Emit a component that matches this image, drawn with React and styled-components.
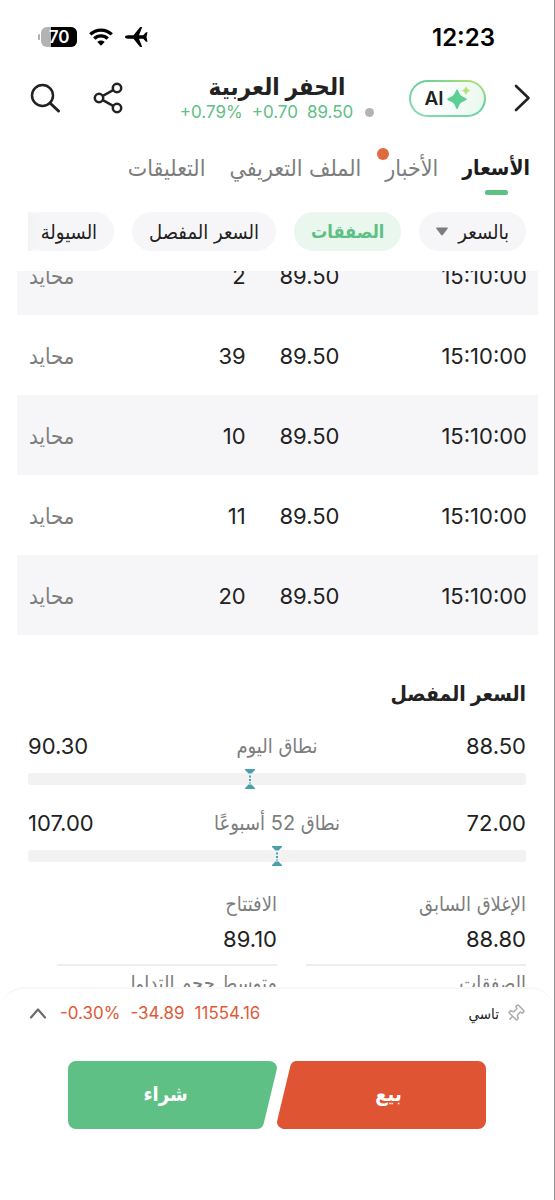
import React, { useLayoutEffect, useRef } from "react";
import styled, { createGlobalStyle } from "styled-components";
import { Pin } from "lucide-react";

const GlobalStyle = createGlobalStyle`
  * { box-sizing: border-box; }
  body {
    margin: 0;
    background: #fff;
    color: #222;
    font-family: Inter, "DejaVu Sans Condensed", "DejaVu Sans", sans-serif;
  }
  button, a { font-family: inherit; color: inherit; }
  button { border: 0; padding: 0; background: none; cursor: pointer; }
`;

const Screen = styled.main`
  height: 100vh;
  display: flex;
  flex-direction: column;
  overflow: hidden;
  background: #fff;
  border-right: 1px solid #909090;
`;

const StatusBar = styled.div`
  display: flex;
  align-items: center;
  justify-content: space-between;
  height: 72px;
  flex: none;
  padding: 2px 59px 0 38px;
  color: #000;
`;
const Clock = styled.time`
  font-size: 24px;
  font-weight: 600;
`;
const StatusIcons = styled.div`
  display: flex;
  align-items: center;
  gap: 12px;
  direction: ltr;
`;

const Header = styled.header`
  display: grid;
  grid-template-columns: 1fr auto 1fr;
  align-items: center;
  height: 52px;
  flex: none;
  padding: 0 23px;
`;
const HeaderSide = styled.div`
  display: flex;
  align-items: center;
  gap: ${(p) => p.$gap}px;
  justify-content: ${(p) => (p.$end ? "flex-end" : "flex-start")};
  padding-inline-end: ${(p) => (p.$end ? 7 : 0)}px;
`;
const IconButton = styled.button`
  display: flex;
  color: #222;
`;
const AiButton = styled.button`
  display: flex;
  align-items: center;
  justify-content: center;
  gap: 3px;
  width: 77px;
  height: 37px;
  border: 2px solid transparent;
  border-radius: 19px;
  background: linear-gradient(100deg, #fff 30%, #e9f8f0) padding-box,
    linear-gradient(200deg, #c3e36c, #62ce9d 40%, #8bdcb8) border-box;
  font-size: 19px;
  font-weight: 600;
  direction: ltr;
`;
const TitleBlock = styled.div`
  display: flex;
  flex-direction: column;
  align-items: center;
  padding-top: 2px;
`;
const Title = styled.h1`
  margin: 0;
  font-size: 24px;
  line-height: 26px;
  font-weight: 700;
`;
const Quote = styled.div`
  display: flex;
  align-items: center;
  gap: 9px;
  font-size: 17px;
  line-height: 24px;
  color: #5fc085;
`;
const Dot = styled.i`
  width: 9px;
  height: 9px;
  margin-inline-end: 3px;
  border-radius: 50%;
  background: #b3b3b3;
`;

const Tabs = styled.nav`
  display: flex;
  flex: none;
  gap: 24px;
  height: 88px;
  padding: 26px 24px 0;
`;
const Tab = styled.a`
  position: relative;
  display: flex;
  flex-direction: column;
  align-items: center;
  gap: 4px;
  height: 46px;
  font-size: ${(p) => (p.$active ? 21 : 23)}px;
  line-height: 36px;
  font-weight: ${(p) => (p.$active ? 700 : 400)};
  color: ${(p) => (p.$active ? "#1c1c1c" : "#7d7d7d")};
  white-space: nowrap;
  text-decoration: none;
  &::after {
    content: "";
    width: 23px;
    height: 5px;
    border-radius: 2px;
    background: ${(p) => (p.$active ? "#5fc085" : "transparent")};
  }
`;
const Badge = styled.i`
  position: absolute;
  top: -2px;
  left: -8px;
  width: 12px;
  height: 12px;
  border-radius: 50%;
  background: #e06a40;
`;

const Chips = styled.div`
  position: relative;
  display: flex;
  flex: none;
  gap: 18px;
  margin: 0 28px 20px;
  overflow: hidden;
  &::after {
    content: "";
    position: absolute;
    inset: 0 auto 0 0;
    width: 12px;
    background: linear-gradient(90deg, #f0f2f4, #f6f6f800);
  }
`;
const Chip = styled.button`
  display: flex;
  align-items: center;
  justify-content: center;
  gap: 10px;
  flex: none;
  height: 39px;
  padding: 0 17px;
  border-radius: 20px;
  font-size: ${(p) => (p.$active ? 18 : 20)}px;
  font-weight: ${(p) => (p.$active ? 700 : 400)};
  color: ${(p) => (p.$active ? "#5fc085" : "#222")};
  background: ${(p) => (p.$active ? "#e9f7ef" : "#f6f6f8")};
`;

const Scroll = styled.div`
  flex: 1;
  min-height: 0;
  overflow-y: auto;
  scrollbar-width: none;
`;
const Trades = styled.table`
  width: calc(100% - 33px);
  margin: 0 16px 0 17px;
  table-layout: fixed;
  border-collapse: collapse;
  font-size: 22px;
`;
const TradeRow = styled.tr`
  height: 80px;
  &:nth-child(odd) { background: #f6f6f9; }
`;
const Cell = styled.td`
  width: ${(p) => p.$width};
  padding: 2px 11px 0;
  text-align: start;
`;
const SideCell = styled(Cell)`
  padding-inline-end: 12px;
  text-align: end;
  font-size: 22px;
  color: #7d7d7d;
`;

const Details = styled.section`
  padding: 42px 28px 0;
`;
const SectionTitle = styled.h2`
  margin: 0 0 19px;
  font-size: 21px;
  line-height: 34px;
  font-weight: 700;
`;
const Range = styled.div`
  margin-bottom: 22px;
`;
const RangeLabels = styled.div`
  display: grid;
  grid-template-columns: 1fr auto 1fr;
  align-items: center;
  height: 33px;
  margin-bottom: 10px;
  font-size: 22px;
  line-height: 33px;
`;
const Muted = styled.span`
  font-size: 20px;
  color: #7d7d7d;
`;
const EndValue = styled.span`
  text-align: end;
`;
const Track = styled.div`
  position: relative;
  height: 12px;
  border-radius: 3px;
  background: #f2f2f2;
`;
const Marker = styled.svg`
  position: absolute;
  top: -4px;
  margin-left: -5px;
`;
const Stats = styled.dl`
  display: grid;
  grid-template-columns: 1fr 1fr;
  column-gap: 29px;
  margin: 25px 0 0;
  padding-left: 29px;
`;
const Stat = styled.div`
  height: 79px;
  border-bottom: 2px solid #eee;
  white-space: nowrap;
`;
const StatLabel = styled.dt`
  font-size: 20px;
  line-height: 34px;
  color: #7d7d7d;
`;
const StatValue = styled.dd`
  margin: 0;
  font-size: 22px;
  line-height: 36px;
`;

const Footer = styled.footer`
  position: relative;
  flex: none;
  height: 213px;
  background: #fff;
  border-top: 2px solid #f8f8f8;
  border-radius: 24px 24px 0 0;
`;
const Ticker = styled.div`
  display: flex;
  align-items: center;
  height: 48px;
  padding: 0 29px;
  font-size: 17px;
`;
const PinIcon = styled(Pin)`
  color: #b0b0b0;
  transform: rotate(45deg);
`;
const IndexName = styled.span`
  margin-inline-start: 7px;
  font-size: 15px;
`;
const IndexValues = styled.span`
  display: flex;
  gap: 10px;
  margin-inline: auto 13px;
  color: #e05a38;
`;
const Actions = styled.div`
  display: flex;
  padding: 24px 68px 0;
`;
const Action = styled.button`
  position: relative;
  flex: 1;
  height: 68px;
  padding: ${(p) => (p.$sell ? "0 0 2px 14px" : "0 14px 2px 0")};
  font-size: 20px;
  font-weight: 700;
  color: #fff;
`;
const ActionShape = styled.svg`
  position: absolute;
  inset: 0;
  width: 100%;
  height: 100%;
`;
const ActionLabel = styled.span`
  position: relative;
`;

const Num = ({ children }) => <bdi dir="ltr">{children}</bdi>;

const trades = [
  ["15:10:00", "89.50", "2"],
  ["15:10:00", "89.50", "39"],
  ["15:10:00", "89.50", "10"],
  ["15:10:00", "89.50", "11"],
  ["15:10:00", "89.50", "20"],
];

const ranges = [
  { low: "88.50", label: "نطاق اليوم", high: "90.30", at: 44.6 },
  { low: "72.00", label: "نطاق 52 أسبوعًا", high: "107.00", at: 50 },
];

const stats = [
  ["الإغلاق السابق", "88.80"],
  ["الافتتاح", "89.10"],
  ["الصفقات"],
  ["متوسط حجم التداول"],
];

function Battery() {
  return (
    <svg width="39" height="20" viewBox="0 0 39 20" role="img" aria-label="70%">
      <path d="M2 7a3 3 0 0 0 0 6z" fill="#b3b3b3" />
      <rect x="3" width="36" height="20" rx="6" fill="#b3b3b3" />
      <path d="M13 0h20a6 6 0 0 1 6 6v8a6 6 0 0 1-6 6H13z" fill="#000" />
      <text x="21" y="16" textAnchor="middle" fontSize="17" fontWeight="600" fill="#fff" fontFamily="Inter">70</text>
    </svg>
  );
}
function Wifi() {
  return (
    <svg width="24" height="18" viewBox="0 0 24 18" fill="none" stroke="#000" strokeWidth="3.400">
      <path d="M1.3 6.4a15.4 15.4 0 0 1 21.4 0" />
      <path d="M5.3 10.6a9.6 9.6 0 0 1 13.4 0" />
      <path d="M8.3 14a5.4 5.4 0 0 1 7.4 0L12 17.8z" fill="#000" stroke="none" />
    </svg>
  );
}
function Plane() {
  return (
    <svg width="23" height="20" viewBox="0 0 23 20">
      <path d="M0 10c0-1 1.300-1.700 3-1.700h5.500L14.500.8c.4-.5.800-.8 1.400-.8h1.300l-3.200 8.300h4.200L21 5.300h1.500L21.500 10l1 4.700H21l-2.800-3H14L17.200 20h-1.300c-.6 0-1-.3-1.400-.8l-6-7.500H3c-1.700 0-3-.7-3-1.700z" />
    </svg>
  );
}

export default function App() {
  const scroller = useRef(null);
  useLayoutEffect(() => {
    scroller.current.scrollTop = 36;
  }, []);

  return (
    <Screen dir="rtl" lang="ar">
      <GlobalStyle />
      <StatusBar>
        <Clock>12:23</Clock>
        <StatusIcons>
          <Battery />
          <Wifi />
          <Plane />
        </StatusIcons>
      </StatusBar>

      <Header>
        <HeaderSide $gap={27}>
          <IconButton aria-label="رجوع">
            <svg width="18" height="28" viewBox="0 0 18 28" fill="none" stroke="currentColor" strokeWidth="2.600" strokeLinecap="round" strokeLinejoin="round">
              <path d="M3 2l12.500 12L3 26" />
            </svg>
          </IconButton>
          <AiButton>
            AI
            <svg width="24" height="24" viewBox="0 0 24 24">
              <path d="M10 4.500c1.600 5 3.400 6.800 8.700 8.700-5.300 1.900-7.100 3.700-8.700 8.800-1.600-5.100-3.400-6.900-8.700-8.800C6.600 11.300 8.400 9.500 10 4.500z" fill="#5fce93" stroke="#5fce93" strokeWidth="2" strokeLinejoin="round" />
              <path d="M19 0c.9 2.700 2 3.700 4.800 4.600-2.800 1-3.900 2-4.800 4.700-.9-2.700-2-3.700-4.800-4.700 2.800-.9 3.900-1.900 4.800-4.600z" fill="#b5e27a" />
            </svg>
          </AiButton>
        </HeaderSide>
        <TitleBlock>
          <Title>الحفر العربية</Title>
          <Quote>
            <Dot />
            <Num>89.50</Num>
            <Num>+0.70</Num>
            <Num>+0.79%</Num>
          </Quote>
        </TitleBlock>
        <HeaderSide $gap={32} $end>
          <IconButton aria-label="مشاركة">
            <svg width="31" height="32" viewBox="0 0 31 32" fill="none" stroke="currentColor" strokeWidth="2.500">
              <circle cx="6" cy="16" r="4.200" />
              <circle cx="24" cy="6" r="4.200" />
              <circle cx="24" cy="26" r="4.200" />
              <path d="M9.800 13.900l10.400-5.800M9.800 18.100l10.400 5.800" />
            </svg>
          </IconButton>
          <IconButton aria-label="بحث">
            <svg width="31" height="30" viewBox="0 0 31 30" fill="none" stroke="currentColor" strokeWidth="2.500" strokeLinecap="round">
              <circle cx="12.500" cy="12.500" r="10.500" />
              <path d="M20 20l8.500 8" strokeWidth="3" />
            </svg>
          </IconButton>
        </HeaderSide>
      </Header>

      <Tabs>
        <Tab href="#prices" $active>الأسعار</Tab>
        <Tab href="#news">الأخبار<Badge /></Tab>
        <Tab href="#profile">الملف التعريفي</Tab>
        <Tab href="#comments">التعليقات</Tab>
      </Tabs>

      <Chips>
        <Chip>
          بالسعر
          <svg width="12" height="9" viewBox="0 0 12 9"><path d="M1 .5h10c.8 0 1 .6.600 1.200L6.800 8c-.4.600-1.200.600-1.600 0L.4 1.700C0 1.100.2.500 1 .5z" fill="#7d7d7d" /></svg>
        </Chip>
        <Chip $active>الصفقات</Chip>
        <Chip>السعر المفصل</Chip>
        <Chip>السيولة</Chip>
      </Chips>

      <Scroll ref={scroller}>
        <Trades>
          <tbody>
            {trades.map(([time, price, qty], i) => (
              <TradeRow key={i}>
                <Cell $width="36%"><Num>{time}</Num></Cell>
                <Cell $width="18%">{price}</Cell>
                <Cell $width="18%">{qty}</Cell>
                <SideCell $width="28%">محايد</SideCell>
              </TradeRow>
            ))}
          </tbody>
        </Trades>

        <Details>
          <SectionTitle>السعر المفصل</SectionTitle>
          {ranges.map((r) => (
            <Range key={r.label}>
              <RangeLabels>
                <span>{r.low}</span>
                <Muted>{r.label}</Muted>
                <EndValue>{r.high}</EndValue>
              </RangeLabels>
              <Track>
                <Marker width="10" height="20" viewBox="0 0 10 20" style={{ left: `${r.at}%` }}>
                  <path d="M0 0h10v1L6.500 4.500h-3L0 1zM0 20h10v-1l-3.500-3.500h-3L0 19z" fill="#4a9fb0" />
                  <path d="M5 6.500v8" stroke="#4a9fb0" strokeWidth="2" strokeDasharray="2 1.500" />
                </Marker>
              </Track>
            </Range>
          ))}
          <Stats>
            {stats.map(([label, value]) => (
              <Stat key={label}>
                <StatLabel>{label}</StatLabel>
                <StatValue>{value}</StatValue>
              </Stat>
            ))}
          </Stats>
        </Details>
      </Scroll>

      <Footer>
        <Ticker>
          <PinIcon size={19} strokeWidth={2} />
          <IndexName>تاسي</IndexName>
          <IndexValues>
            <Num>11554.16</Num>
            <Num>-34.89</Num>
            <Num>-0.30%</Num>
          </IndexValues>
          <IconButton aria-label="توسيع">
            <svg width="18" height="11" viewBox="0 0 18 11" fill="none" stroke="#6b6b6b" strokeWidth="2.200" strokeLinecap="round" strokeLinejoin="round">
              <path d="M2 9.500l7-8 7 8" />
            </svg>
          </IconButton>
        </Ticker>
        <Actions>
          <Action $sell>
            <ActionShape viewBox="0 0 209 69" preserveAspectRatio="none">
              <path d="M20 0H201a8 8 0 0 1 8 8V61a8 8 0 0 1-8 8H8C3 69-1 65 .3 60L13 6.500C14 2 16 0 20 0z" fill="#df5534" />
            </ActionShape>
            <ActionLabel>بيع</ActionLabel>
          </Action>
          <Action>
            <ActionShape viewBox="0 0 209 69" preserveAspectRatio="none">
              <path d="M8 0H201c5 0 9 4 7.700 9L196 62.500C195 67 193 69 189 69H8a8 8 0 0 1-8-8V8a8 8 0 0 1 8-8z" fill="#5fc085" />
            </ActionShape>
            <ActionLabel>شراء</ActionLabel>
          </Action>
        </Actions>
      </Footer>
    </Screen>
  );
}
